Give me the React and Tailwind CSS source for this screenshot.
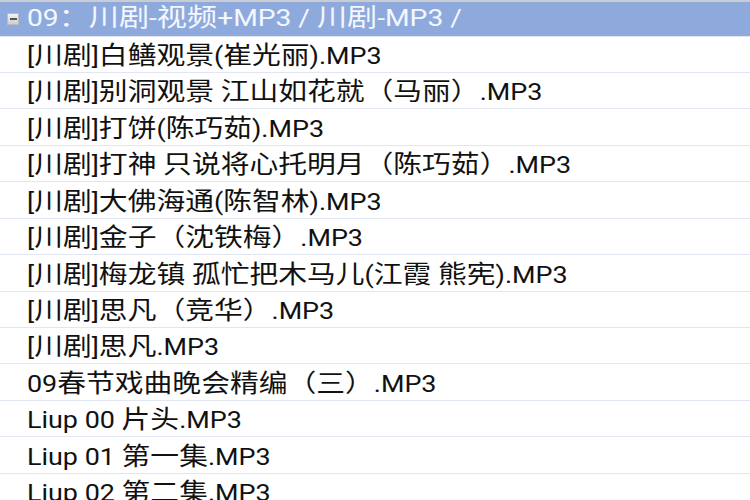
const rows = [
  '[川剧]白鳝观景(崔光丽).MP3',
  '[川剧]别洞观景 江山如花就（马丽）.MP3',
  '[川剧]打饼(陈巧茹).MP3',
  '[川剧]打神 只说将心托明月（陈巧茹）.MP3',
  '[川剧]大佛海通(陈智林).MP3',
  '[川剧]金子（沈铁梅）.MP3',
  '[川剧]梅龙镇 孤忙把木马儿(江霞 熊宪).MP3',
  '[川剧]思凡（竞华）.MP3',
  '[川剧]思凡.MP3',
  '09春节戏曲晚会精编（三）.MP3',
  'Liup 00 片头.MP3',
  'Liup 01 第一集.MP3',
  'Liup 02 第二集.MP3',
];

const CJK = /([\u3000-\u303f\u4e00-\u9fff\uff00-\uffef]+)/;

// CJK runs are a touch larger than the latin text
const Label = ({ text, className = 'scale-x-[1.17]' }) => {
  const parts = text.split(CJK).filter(Boolean);
  return (
    <span className={`whitespace-pre origin-left ${className}`}>
      {parts.map((p, i) =>
        CJK.test(p)
          ? <span key={i} className="text-[24.6px]">{p}</span>
          : <span key={i}>{p}</span>
      )}
    </span>
  );
};

const App = () => {
  return (
    <div className="w-[750px] h-[500px] overflow-hidden bg-white font-['Roboto','Noto_Sans_CJK_SC',sans-serif] text-[23px] leading-none">
      {/* group header */}
      <div className="h-[36.5px] border-t-2 border-[#c9ccd2] bg-[#8eaadc] border-b-[1.5px] border-b-[#dfe5f2] flex items-center text-[#f4f7fd]">
        <div className="ml-[7px] mr-[8px] w-3 h-3 shrink-0 bg-gradient-to-b from-[#f2f2f2] to-[#cfcfcf] border border-[#b8bcc4] flex items-center justify-center">
          <div className="w-[7px] h-[2px] bg-[#555]" />
        </div>
        <Label text="09：川剧-视频+MP3 / 川剧-MP3 /" className="scale-x-[1.225]" />
      </div>

      {rows.map((r) => (
        <div key={r} className="h-[36.45px] border-b-[1.5px] border-[#e1e6f3] flex items-center pl-[27px] pt-[4px] text-[#111]">
          <Label text={r} />
        </div>
      ))}
    </div>
  );
};

export default App;
